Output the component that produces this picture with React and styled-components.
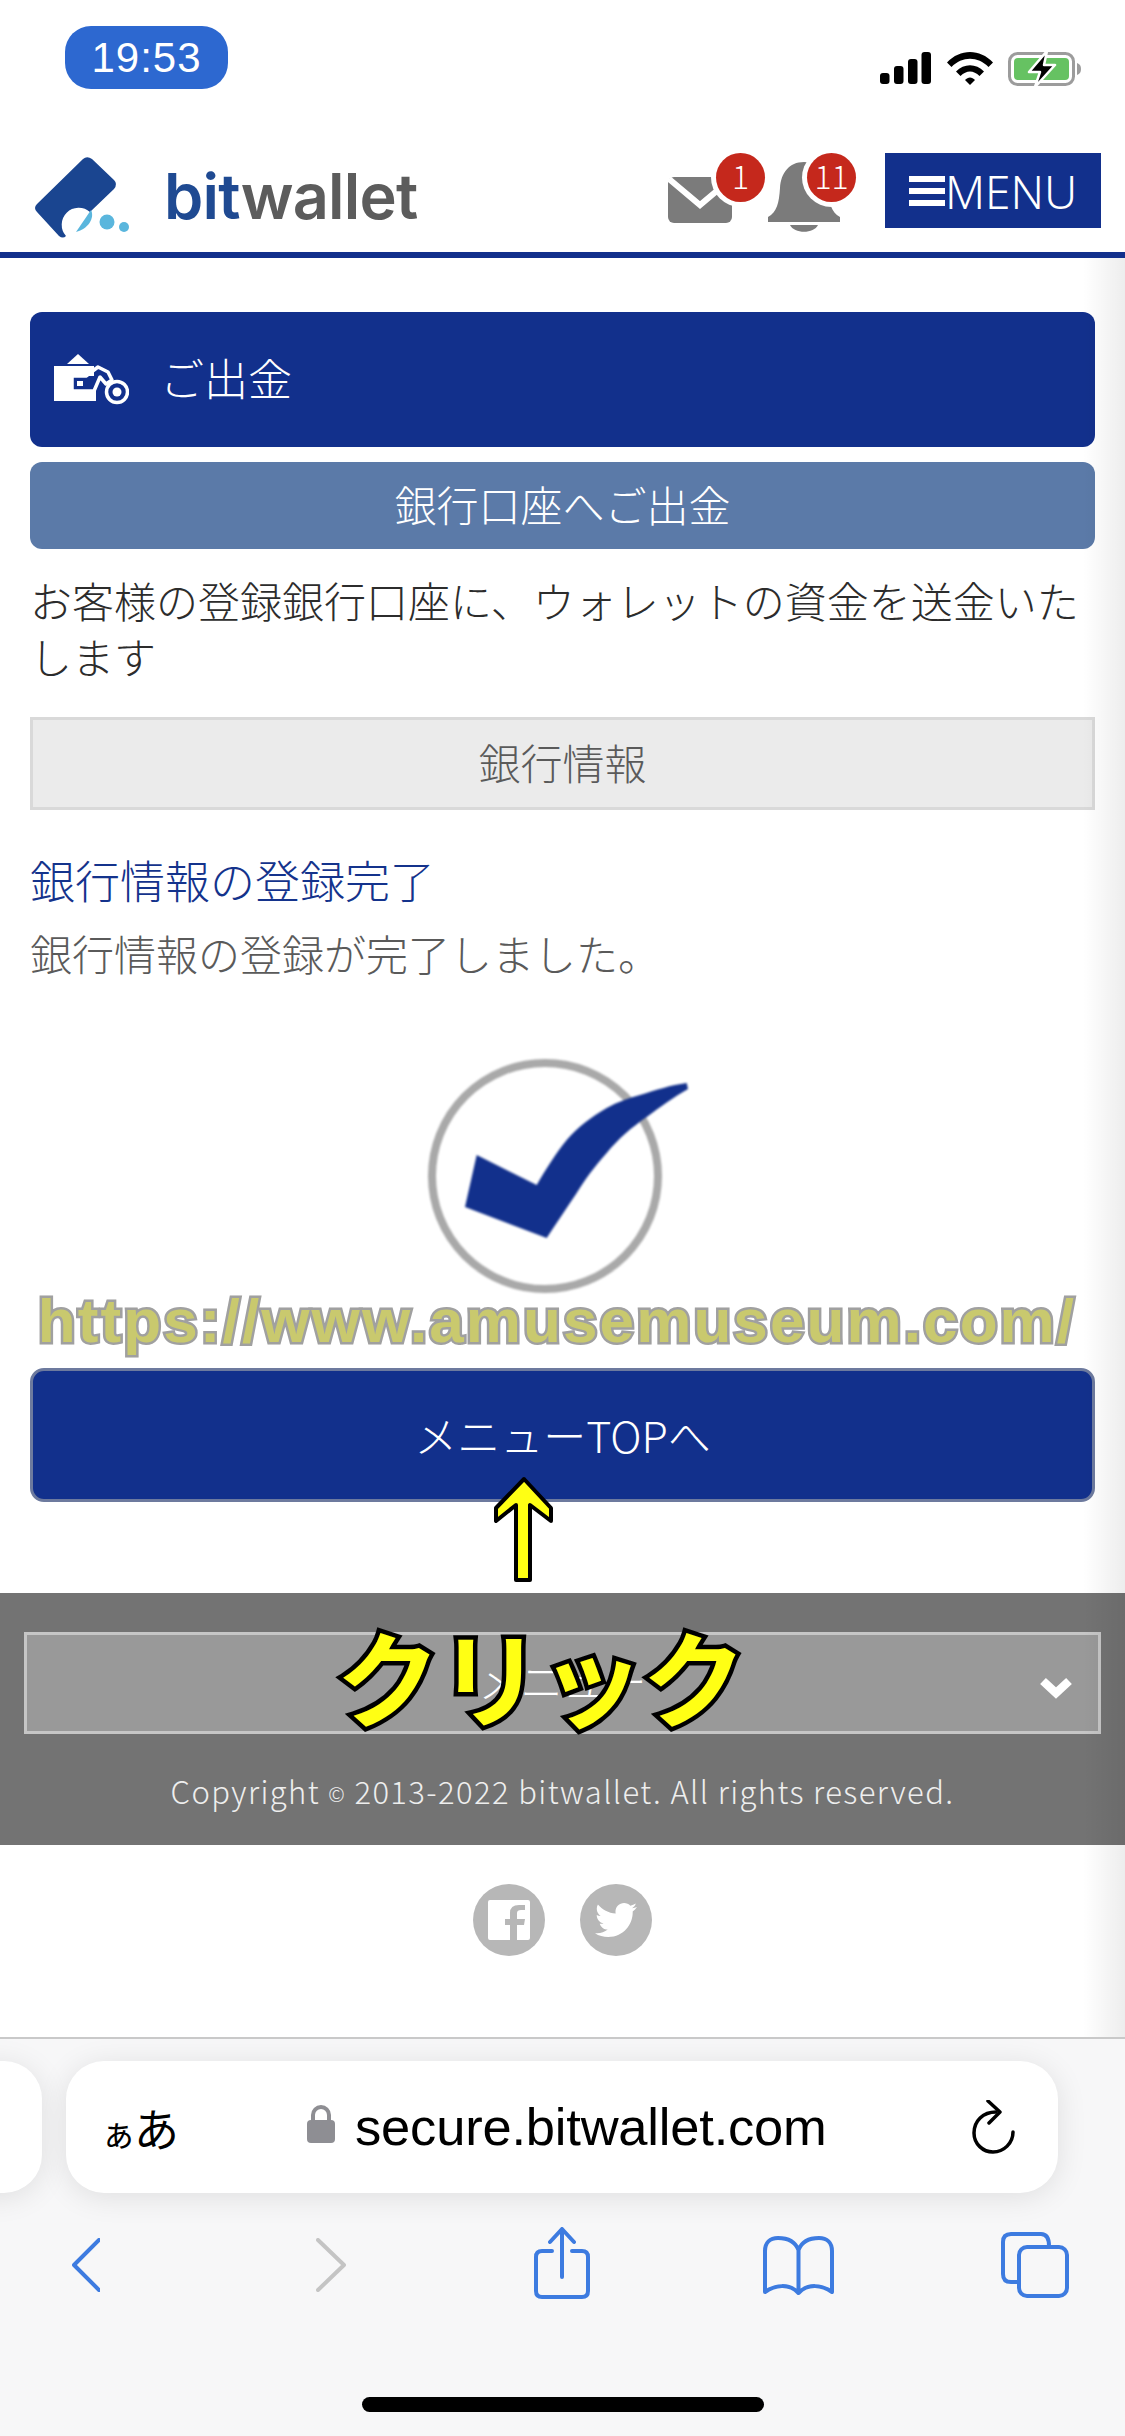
import React from "react";
import styled, { createGlobalStyle } from "styled-components";
import { FaTwitter } from "react-icons/fa";

const JP = `"Noto Sans CJK JP", "Noto Sans", sans-serif`;
const NAVY = "#12308c";

const Global = createGlobalStyle`
  html, body { margin: 0; padding: 0; background: #fff; }
  * { box-sizing: border-box; }
`;

const Page = styled.div`
  position: relative;
  width: 1125px;
  height: 2436px;
  overflow: hidden;
  display: flex;
  flex-direction: column;
  background: #fff;
  font-family: ${JP};
  font-weight: 300;
`;

/* status bar */
const StatusBar = styled.div`
  height: 130px;
  display: flex;
  justify-content: space-between;
  padding: 26px 43px 0 65px;
`;
const TimePill = styled.div`
  width: 163px;
  height: 63px;
  border-radius: 26px;
  background: #2d68d0;
  color: #fff;
  font: 400 42px/63px "Liberation Sans", sans-serif;
  letter-spacing: 1px;
  text-align: center;
`;
const StatusIcons = styled.div`
  display: flex;
  gap: 15px;
  padding-top: 26px;
  align-items: flex-start;
`;

/* header */
const Header = styled.header`
  height: 128px;
  border-bottom: 6px solid ${NAVY};
  display: flex;
  align-items: flex-start;
  padding: 23px 24px 0 34px;
`;
const Brand = styled.div`
  display: flex;
  align-items: center;
  gap: 36px;
  height: 84px;
  margin-top: 3px;
`;
const Wordmark = styled.div`
  font: 600 63px/1 Inter, "Liberation Sans", sans-serif;
  letter-spacing: -0.8px;
  color: #5c5c5c;
  margin-top: -3px;
  span { color: #1f4a92; }
`;
const HeaderRight = styled.div`
  margin-left: auto;
  display: flex;
  align-items: flex-start;
`;
const IconSlot = styled.div`
  position: relative;
  width: ${(p) => p.$w}px;
  height: 71px;
  margin-top: 9px;
  margin-right: ${(p) => p.$mr}px;
`;
const Badge = styled.div`
  position: absolute;
  top: -9px;
  left: ${(p) => p.$left}px;
  width: 49px;
  height: 49px;
  border-radius: 50%;
  background: #c5281c;
  box-shadow: 0 0 0 5px #fff;
  color: #fff;
  font: 300 32px/45px ${JP};
  text-align: center;
`;
const MenuButton = styled.div`
  width: 216px;
  height: 75px;
  background: ${NAVY};
  color: #fff;
  display: flex;
  align-items: center;
  padding-left: 24px;
  gap: 0;
  font: 300 46px/1 "Noto Sans", sans-serif;
`;
const Burger = styled.div`
  width: 36px;
  height: 30px;
  border-top: 6px solid #fff;
  border-bottom: 6px solid #fff;
  position: relative;
  &::after {
    content: "";
    position: absolute;
    left: 0;
    right: 0;
    top: 6px;
    height: 6px;
    background: #fff;
  }
`;

/* main */
const Main = styled.main`
  padding: 54px 30px 91px;
  display: flex;
  flex-direction: column;
`;
const TitleBar = styled.div`
  height: 135px;
  border-radius: 12px;
  background: ${NAVY};
  color: #fff;
  display: flex;
  align-items: center;
  gap: 31px;
  padding: 0 0 6px 24px;
  font-size: 44px;
`;
const TitleIcon = styled.svg`
  width: 75px;
  height: 51px;
  margin-top: 6px;
`;
const SubBar = styled.div`
  height: 87px;
  margin-top: 15px;
  border-radius: 12px;
  background: #5b7aa8;
  color: #fff;
  font-size: 42px;
  line-height: 83px;
  text-align: center;
`;
const Lead = styled.p`
  margin: 23px 0 0;
  font-size: 42px;
  line-height: 56px;
  color: #2c2c2c;
`;
const InfoBox = styled.div`
  height: 93px;
  margin-top: 33px;
  background: #ebebeb;
  border: 3px solid #d9d9d9;
  color: #5a5a5a;
  font-size: 42px;
  line-height: 83px;
  text-align: center;
`;
const DoneTitle = styled.h2`
  margin: 40px 0 0;
  font-size: 45px;
  font-weight: 300;
  line-height: 60px;
  color: #14338c;
`;
const DoneText = styled.p`
  margin: 15px 0 0;
  font-size: 42px;
  line-height: 56px;
  color: #5a5a5a;
`;
const CheckArt = styled.svg`
  display: block;
  width: 269px;
  height: 234px;
  margin: 78px auto 0;
  overflow: visible;
  filter: blur(0.8px);
`;
const TopButton = styled.div`
  height: 134px;
  margin-top: 75px;
  border: 3px solid #6d7a9e;
  border-radius: 14px;
  background: ${NAVY};
  color: #fff;
  font-size: 43px;
  line-height: 126px;
  text-align: center;
`;

/* footer */
const Footer = styled.footer`
  height: 252px;
  background: #737373;
  padding: 39px 24px 0;
`;
const SelectBox = styled.div`
  position: relative;
  height: 102px;
  background: #999;
  border: 3px solid #c6c6c6;
  color: #fff;
  font-size: 42px;
  line-height: 90px;
  text-align: center;
`;
const Chevron = styled.svg`
  position: absolute;
  right: 25px;
  top: 40px;
  width: 34px;
  height: 24px;
`;
const Copyright = styled.div`
  margin-top: 37px;
  color: #eee;
  font: 300 31px/40px ${JP};
  letter-spacing: 1.4px;
  text-align: center;
  small { font-size: 20px; vertical-align: 2px; }
`;

/* social */
const SocialRow = styled.div`
  height: 192px;
  padding-top: 39px;
  display: flex;
  justify-content: center;
  gap: 35px;
`;
const SocialDot = styled.div`
  width: 72px;
  height: 72px;
  border-radius: 50%;
  background: #b7b7b7;
  color: #fff;
  display: flex;
  align-items: center;
  justify-content: center;
`;

/* browser chrome */
const Chrome = styled.div`
  flex: 1;
  position: relative;
  background: #f7f7f8;
  border-top: 2px solid #c9c9c9;
  padding-top: 22px;
  display: flex;
  flex-direction: column;
`;
const AddressRow = styled.div`
  display: flex;
  gap: 24px;
  margin-left: -300px;
  width: 1358px;
`;
const SideTab = styled.div`
  width: 342px;
  height: 132px;
  border-radius: 38px;
  background: #fff;
  box-shadow: 0 4px 30px rgba(0, 0, 0, 0.1);
`;
const Address = styled.div`
  width: 992px;
  height: 132px;
  border-radius: 38px;
  background: #fff;
  box-shadow: 0 4px 30px rgba(0, 0, 0, 0.1);
  display: flex;
  align-items: center;
  padding: 0 43px 0 35px;
  color: #000;
`;
const TextSize = styled.span`
  font: 400 45px/1 ${JP};
  letter-spacing: -2px;
  small { font-size: 35px; }
`;
const Url = styled.span`
  font: 400 52.5px/1 "Liberation Sans", sans-serif;
  margin-left: 20px;
  letter-spacing: -0.2px;
`;
const LockIcon = styled.svg`
  width: 28px;
  height: 38px;
  margin-left: 130px;
  margin-top: -6px;
`;
const Reload = styled.svg`
  width: 44px;
  height: 54px;
  margin-left: auto;
`;
const ToolBar = styled.div`
  position: relative;
  display: flex;
  align-items: flex-start;
  padding: 35px 0 0 72px;
`;
const ToolIcon = styled.svg`
  width: ${(p) => p.$w}px;
  height: ${(p) => p.$h}px;
  margin-left: ${(p) => p.$ml}px;
  margin-top: ${(p) => p.$mt}px;
  fill: none;
  stroke: ${(p) => p.$c || "#3d7be0"};
  stroke-width: 4;
  stroke-linecap: round;
  stroke-linejoin: round;
  flex: none;
`;
const HomeBar = styled.div`
  position: absolute;
  left: 362px;
  top: 358px;
  width: 402px;
  height: 15px;
  border-radius: 8px;
  background: #000;
`;

/* annotations over the page */
const EdgeShade = styled.div`
  position: absolute;
  top: 258px;
  right: 0;
  width: 42px;
  height: 1779px;
  background: linear-gradient(to right, rgba(0, 0, 0, 0), rgba(0, 0, 0, 0.07));
  pointer-events: none;
`;
const Watermark = styled.div`
  position: absolute;
  left: 0;
  width: 1114px;
  top: 1280px;
  text-align: center;
  font: 700 62px/82px "Liberation Sans", sans-serif;
  letter-spacing: 2.1px;
  color: #c9c96e;
  -webkit-text-stroke: 5px #a0a0a0;
  paint-order: stroke fill;
  white-space: nowrap;
`;
const ArrowMark = styled.svg`
  position: absolute;
  left: 490px;
  top: 1475px;
  width: 68px;
  height: 110px;
`;
const ClickMark = styled.div`
  position: absolute;
  left: 336px;
  top: 1600px;
  font: 700 104px/150px ${JP};
  letter-spacing: -2px;
  color: #ffff14;
  -webkit-text-stroke: 9px #000;
  paint-order: stroke fill;
  white-space: nowrap;
`;

export default function App() {
  return (
    <Page>
      <Global />
      <StatusBar>
        <TimePill>19:53</TimePill>
        <StatusIcons>
          <svg width="52" height="33" viewBox="0 0 52 33">
            <rect x="0" y="21" width="9.5" height="11" rx="3" />
            <rect x="14" y="14" width="9.5" height="18" rx="3" />
            <rect x="28" y="7" width="9.5" height="25" rx="3" />
            <rect x="41.5" y="0" width="9.5" height="32" rx="3" />
          </svg>
          <svg width="46" height="33" viewBox="0 0 46 33">
            <path d="M0 10.5 C13 -3.5 33 -3.5 46 10.5 L41.5 15 C31 4 15 4 4.5 15Z" />
            <path d="M9 19.5 C17 11 29 11 37 19.5 L32.5 24 C26.5 18 19.5 18 13.5 24Z" />
            <path d="M18 28 C21 24.5 25 24.5 28 28 L23 33Z" />
          </svg>
          <svg width="74" height="36" viewBox="0 0 74 36" style={{ marginTop: -1 }}>
            <rect x="1.5" y="2.5" width="64" height="31" rx="8" fill="#fff" stroke="#9c9c9c" strokeWidth="3" />
            <rect x="6" y="7" width="55" height="22" rx="4" fill="#66c262" />
            <path d="M69 12 C72 13 73 15 73 18 C73 21 72 23 69 24Z" fill="#9c9c9c" />
            <path d="M39 0 L21 21 L32 21 L27 36 L47 14 L36 14Z" fill="#000" stroke="#fff" strokeWidth="2.5" strokeLinejoin="round" />
          </svg>
        </StatusIcons>
      </StatusBar>

      <Header>
        <Brand>
          <svg width="94" height="84" viewBox="0 0 94 84" style={{ overflow: "visible" }}>
            <path d="M49 3 Q53 -0.5 58 3 L80 24 Q84 28 80 33 L56 56 A17 17 0 0 0 32 80 Q29 83 25 80 L3 56 Q-1 52 3 48Z" fill="#1a4590" />
            <path d="M57 54 C61 62 54 73 42 76Z" fill="#5ab6dd" />
            <circle cx="73" cy="66" r="7.5" fill="#5ab6dd" />
            <circle cx="90" cy="71" r="5" fill="#5ab6dd" />
          </svg>
          <Wordmark>
            <span>bit</span>wallet
          </Wordmark>
        </Brand>
        <HeaderRight>
          <IconSlot $w={64} $mr={36}>
            <svg width="64" height="46" viewBox="0 0 64 46" style={{ marginTop: 15 }}>
              <rect width="64" height="46" rx="6" fill="#7b7b7b" />
              <path d="M1 2 L32 28 L63 2" fill="none" stroke="#fff" strokeWidth="6" />
            </svg>
            <Badge $left={48}>1</Badge>
          </IconSlot>
          <IconSlot $w={72} $mr={45}>
            <svg width="72" height="72" viewBox="0 0 72 72">
              <path d="M36 0 C21 0 13 11 12 26 C11 41 9 50 0 55 L0 60 L72 60 L72 55 C63 50 61 41 60 26 C59 11 51 0 36 0Z" fill="#7b7b7b" />
              <path d="M22 63 L50 63 C46 72 26 72 22 63Z" fill="#7b7b7b" />
            </svg>
            <Badge $left={39}>11</Badge>
          </IconSlot>
          <MenuButton>
            <Burger />
            MENU
          </MenuButton>
        </HeaderRight>
      </Header>

      <Main>
        <TitleBar>
          <TitleIcon viewBox="0 0 75 51">
            <path d="M13 10 L24 0 L35 10Z" fill="#fff" />
            <path d="M0 12 H40 V22 H17 V37 H42 V47 H0Z" fill="#fff" />
            <path d="M18 22 H32 L44 13 L54 18 L58 26 L52 30 L46 23 L40 37 H18Z" fill="none" stroke="#fff" strokeWidth="3.5" strokeLinejoin="round" />
            <rect x="23" y="27" width="6" height="5" fill="#fff" />
            <circle cx="63" cy="38" r="10.5" fill={NAVY} stroke="#fff" strokeWidth="3.5" />
            <circle cx="63" cy="38" r="4.5" fill="#fff" />
          </TitleIcon>
          ご出金
        </TitleBar>
        <SubBar>銀行口座へご出金</SubBar>
        <Lead>お客様の登録銀行口座に、ウォレットの資金を送金いたします</Lead>
        <InfoBox>銀行情報</InfoBox>
        <DoneTitle>銀行情報の登録完了</DoneTitle>
        <DoneText>銀行情報の登録が完了しました。</DoneText>
        <CheckArt viewBox="0 0 269 234">
          <circle cx="117" cy="117" r="113" fill="none" stroke="#a9a9a9" strokeWidth="8" />
          <path
            d="M48.7 96 L108.7 126 C118 110 128 94 138.7 81 C150 68 163 58 178.7 49 C190 43 200 39 212 36 C228 31 243 26 258.7 24 L260 30 C246 38 232 48 218.7 58 C204 68 190 80 178.7 94 C166 108 156 122 148.7 134 C138 150 128 165 118.7 179 L37 148Z"
            fill={NAVY}
          />
        </CheckArt>
        <TopButton>メニューTOPへ</TopButton>
      </Main>

      <Footer>
        <SelectBox>
          メニュー
          <Chevron viewBox="0 0 34 24">
            <path d="M4 6 L17 18 L30 6" fill="none" stroke="#fff" strokeWidth="8.5" />
          </Chevron>
        </SelectBox>
        <Copyright>
          Copyright <small>©</small> 2013-2022 bitwallet. All rights reserved.
        </Copyright>
      </Footer>

      <SocialRow>
        <SocialDot>
          <svg width="42" height="40" viewBox="0 0 42 40">
            <path
              fillRule="evenodd"
              fill="#fff"
              d="M2 0 H40 Q42 0 42 2 V38 Q42 40 40 40 H29 V25 H36 L37 19 H29 V13 Q29 10 33 10 H37 V5 H31 Q22 5 22 13 V19 H17 V25 H22 V40 H2 Q0 40 0 38 V2 Q0 0 2 0Z"
            />
          </svg>
        </SocialDot>
        <SocialDot>
          <FaTwitter size={42} />
        </SocialDot>
      </SocialRow>

      <Chrome>
        <AddressRow>
          <SideTab />
          <Address>
            <TextSize>
              <small>ぁ</small>あ
            </TextSize>
            <LockIcon viewBox="0 0 28 38">
              <path d="M6 16 V10 A8 8 0 0 1 22 10 V16" fill="none" stroke="#8e8e93" strokeWidth="4" />
              <rect x="0" y="15" width="28" height="23" rx="4" fill="#8e8e93" />
            </LockIcon>
            <Url>secure.bitwallet.com</Url>
            <Reload viewBox="0 0 44 54" fill="none" stroke="#000" strokeWidth="3.5" strokeLinecap="round" strokeLinejoin="round">
              <path d="M25 12 C12 12 3 21 3 33 C3 44 12 52 22 52 C33 52 42 43 42 32" />
              <path d="M17 1 L29 12 L18 23" />
            </Reload>
          </Address>
        </AddressRow>
        <ToolBar>
          <ToolIcon viewBox="0 0 28 54" $w={28} $h={54} $ml={0} $mt={10}>
            <path d="M27 2 L2 27 L27 52" />
          </ToolIcon>
          <ToolIcon viewBox="0 0 30 54" $w={30} $h={54} $ml={216} $mt={10} $c="#c4c4c4">
            <path d="M2 2 L28 27 L2 52" />
          </ToolIcon>
          <ToolIcon viewBox="0 0 56 72" $w={56} $h={72} $ml={188} $mt={-1}>
            <path d="M18 24 H8 Q2 24 2 30 V64 Q2 70 8 70 H48 Q54 70 54 64 V30 Q54 24 48 24 H38" />
            <path d="M28 50 V3 M16 15 L28 2 L40 15" />
          </ToolIcon>
          <ToolIcon viewBox="0 0 71 59" $w={71} $h={59} $ml={173} $mt={8}>
            <path d="M35.5 14 C32 5 24 2 15 2 C7 2 2 7 2 15 V56 C12 49 26 47 35.5 57 C45 47 59 49 69 56 V15 C69 7 64 2 56 2 C47 2 39 5 35.5 14 V57" />
          </ToolIcon>
          <ToolIcon viewBox="0 0 68 66" $w={68} $h={66} $ml={167} $mt={4}>
            <path d="M16 50 H10 Q2 50 2 42 V10 Q2 2 10 2 H40 Q48 2 48 14" />
            <rect x="18" y="15" width="48" height="49" rx="8" />
          </ToolIcon>
        </ToolBar>
        <HomeBar />
      </Chrome>

      <EdgeShade />
      <Watermark>https://www.amusemuseum.com/</Watermark>
      <ArrowMark viewBox="490 1475 68 110">
        <path
          d="M524 1479 L551 1508 V1521 L530 1505 V1580 H516 V1505 L496 1521 V1508Z"
          fill="#ffff14"
          stroke="#000"
          strokeWidth="4"
          strokeLinejoin="round"
        />
      </ArrowMark>
      <ClickMark>クリック</ClickMark>
    </Page>
  );
}
